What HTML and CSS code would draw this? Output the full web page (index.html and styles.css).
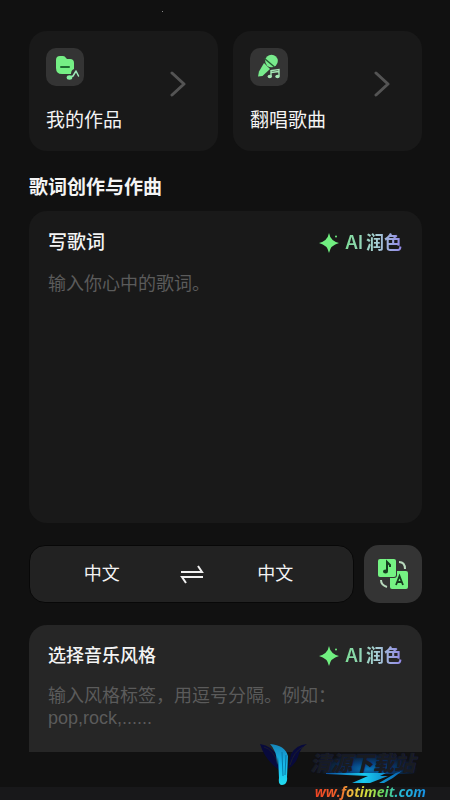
FILE: index.html
```html
<!DOCTYPE html>
<html lang="zh-CN">
<head>
<meta charset="UTF-8">
<meta name="viewport" content="width=device-width, initial-scale=1">
<title>歌词创作与作曲</title>
<link rel="stylesheet" href="styles.css">
</head>
<body>
<main class="page">
  <nav class="shortcuts">
    <a class="shortcut" href="#works">
      <span class="shortcut-main">
        <svg class="tile" viewBox="0 0 38 38" aria-hidden="true">
          <path fill="#75ef85" d="M14 8h3q2 0 3 2l1 1h3q4 0 4 4v6q-3 1-3 5h-9q-6 0-6-6v-8q0-4 4-4z"/>
          <path d="M15 19h8" stroke="#1f6b31" stroke-width="2" stroke-linecap="round"/>
          <path d="M24 29l3-1 3-5 2.500 5" fill="none" stroke="#9ce8b8" stroke-width="1.500" stroke-linejoin="round" stroke-linecap="round"/>
          <ellipse cx="23.500" cy="29.500" rx="2.800" ry="2.200" fill="#84efa0"/>
        </svg>
        <span class="shortcut-name">我的作品</span>
      </span>
      <svg class="chevron" viewBox="0 0 16 26" aria-hidden="true"><path d="M2 2l12 11L2 24"/></svg>
    </a>
    <a class="shortcut" href="#cover">
      <span class="shortcut-main">
        <svg class="tile" viewBox="0 0 38 38" aria-hidden="true">
          <circle cx="21.500" cy="13" r="6.300" fill="#78eb8c"/>
          <path d="M14 15l6 6-7.500 7-4.500.5 1-5z" fill="#78eb8c"/>
          <path d="M14.500 10.500l10 8.500" stroke="#245c31" stroke-width="1.400"/>
          <path d="M21 28v-5.500l8-1v6.500M21 24.500l8-1" fill="none" stroke="#a5e8b5" stroke-width="1.400"/>
          <g fill="#a5e8b5"><ellipse cx="19.800" cy="28.500" rx="2.200" ry="1.700"/><ellipse cx="27.500" cy="28.500" rx="2.200" ry="1.700"/></g>
        </svg>
        <span class="shortcut-name">翻唱歌曲</span>
      </span>
      <svg class="chevron" viewBox="0 0 16 26" aria-hidden="true"><path d="M2 2l12 11L2 24"/></svg>
    </a>
  </nav>

  <h1 class="heading">歌词创作与作曲</h1>

  <section class="panel">
    <div class="panel-head">
      <label class="panel-title" for="lyrics">写歌词</label>
      <button class="polish" type="button">
        <svg class="spark" viewBox="0 0 20 20" aria-hidden="true"><path d="M10 0q1.500 8 10 10-8.500 2-10 10-1.500-8-10-10 8.500-2 10-10z"/><circle cx="17" cy="3.500" r="1"/></svg>
        <span class="polish-text"><span>AI</span><span>润色</span></span>
      </button>
    </div>
    <textarea class="field lyrics" id="lyrics" placeholder="输入你心中的歌词。"></textarea>
  </section>

  <div class="language-row">
    <div class="languages">
      <button class="language" type="button">中文</button>
      <button class="swap" type="button" aria-label="切换">
        <svg viewBox="0 0 24 20" aria-hidden="true"><path d="M1 8h21l-4-6M23 13H2l4 6"/></svg>
      </button>
      <button class="language" type="button">中文</button>
    </div>
    <button class="translate" type="button" aria-label="翻译歌词">
      <svg viewBox="0 0 58 58" aria-hidden="true">
        <path d="M35 17q6 0 6 7M17 35q0 5 6 7" fill="none" stroke="#b9d9bd" stroke-width="2" />
        <rect x="26" y="26" width="18" height="18" rx="2" fill="#75f383"/>
        <rect x="13" y="13" width="20" height="20" rx="3" fill="#343434"/>
        <rect x="14" y="14" width="18" height="18" rx="2" fill="#75f383"/>
        <path d="M23 26v-9l3 3v2" fill="none" stroke="#173e20" stroke-width="2"/>
        <ellipse cx="21.500" cy="26.500" rx="2.500" ry="2" fill="#173e20"/>
        <path d="M32 40l3.500-9 3.500 9M33.500 37h4.500" fill="none" stroke="#173e20" stroke-width="1.800"/>
      </svg>
    </button>
  </div>

  <section class="panel panel-style">
    <div class="panel-head">
      <label class="panel-title panel-title-small" for="style">选择音乐风格</label>
      <button class="polish" type="button">
        <svg class="spark" viewBox="0 0 20 20" aria-hidden="true"><path d="M10 0q1.500 8 10 10-8.500 2-10 10-1.500-8-10-10 8.500-2 10-10z"/><circle cx="17" cy="3.500" r="1"/></svg>
        <span class="polish-text"><span>AI</span><span>润色</span></span>
      </button>
    </div>
    <textarea class="field style-field" id="style" placeholder="输入风格标签，用逗号分隔。例如：pop,rock,......"></textarea>
  </section>
</main>
<footer class="bottom-bar"></footer>
<span class="speck"></span>

<aside class="watermark">
  <svg class="wings" viewBox="0 0 50 44" aria-hidden="true">
    <defs><linearGradient id="wing" x1="0" y1="0" x2="0" y2="1"><stop stop-color="#1684b8"/><stop offset=".5" stop-color="#16b8ec"/><stop offset="1" stop-color="#22dcf0"/></linearGradient></defs>
    <path fill="#080a3c" d="M0 1q12 2 17 12l2 14Q5 17 0 1zM47 1Q36 2 31 11l-3 15q7-4 10-12 2-9 9-13z"/>
    <path fill="none" stroke="#1b1d2c" d="M4 4q10 3 14 17M43 4q-9 4-13 18"/>
    <path fill="url(#wing)" d="M10 1q15 1 18 12l-1 21q1 7-5 8-4 0-3-7l-1-21-1 8q0-10-3-15-2-4-4-6z"/>
    <path d="M22 9l1 24M26 12l-1 20" fill="none" stroke="#087aa9"/>
  </svg>
  <div class="mark-texts">
    <div class="mark-name">清源下载站</div>
    <svg class="swoosh" viewBox="0 0 110 14" aria-hidden="true">
      <defs><linearGradient id="flash"><stop stop-color="#0a4c9c"/><stop offset=".5" stop-color="#18caf0"/><stop offset="1" stop-color="#075db0"/></linearGradient></defs>
      <path fill="url(#flash)" d="M10 3h60l-6 3h8L54 13H36l16-7q-22-1-42-2zM86 1q-8 7-18 12h-5L80 3z"/>
    </svg>
    <div class="mark-site">ww.fotimeit.com</div>
  </div>
</aside>
</body>
</html>
```

FILE: styles.css
```css
* { box-sizing: border-box; }

body {
  position: relative;
  display: flex;
  flex-direction: column;
  min-height: 100vh;
  margin: 0;
  background: #111111;
  color: #f4f4f4;
  font-family: "Inter", "Noto Sans CJK SC", sans-serif;
}

button, textarea { font-family: inherit; border: 0; margin: 0; padding: 0; color: inherit; }
button { cursor: pointer; background: none; }
svg { display: block; }

.page { flex: 1; padding: 31px 28px 0 29px; }

.shortcuts { display: grid; grid-template-columns: 1fr 1fr; gap: 15px; }

.shortcut {
  display: flex;
  justify-content: space-between;
  padding: 17px 32px 16px 17px;
  border-radius: 18px;
  background: #191919;
  color: inherit;
  text-decoration: none;
}

.shortcut-main { display: flex; flex-direction: column; gap: 21px; }
.tile { width: 38px; height: 38px; border-radius: 10px; background: #343434; }
.shortcut-name { font-size: 19px; line-height: 28px; }
.chevron { width: 16px; height: 26px; margin-top: 23px; }
.chevron path { fill: none; stroke: #545454; stroke-width: 3; stroke-linecap: round; stroke-linejoin: round; }

.heading { margin: 23px 0 9px; font-size: 19px; line-height: 28px; font-weight: 600; }

.panel { padding: 18px 20px 16px 19px; border-radius: 18px; background: #191919; }
.panel-head { display: flex; align-items: center; justify-content: space-between; }
.panel-title { font-size: 19px; line-height: 28px; font-weight: 500; }
.panel-title-small { font-size: 18px; }

.polish { display: flex; align-items: center; gap: 6px; }
.spark { width: 20px; height: 20px; fill: #70ef80; }
.polish-text {
  display: flex;
  gap: 3px;
  font-size: 18px;
  line-height: 28px;
  font-weight: 600;
  background: linear-gradient(90deg, #7ddc97, #a8cfd4 55%, #9186e6);
  background-clip: text;
  -webkit-background-clip: text;
  color: transparent;
}

.field {
  display: block;
  width: 100%;
  resize: none;
  outline: 0;
  overflow: hidden;
  background: transparent;
  font-family: "Liberation Sans", "Noto Sans CJK SC", sans-serif;
  font-size: 18px;
  line-height: 22px;
}
.field::placeholder { color: #5b5b5b; opacity: 1; }
.lyrics { height: 234px; margin-top: 16px; }

.language-row { display: flex; gap: 10px; margin: 22px 0; }
.languages {
  flex: 1;
  display: grid;
  grid-template-columns: 1fr 30px 1fr;
  align-items: center;
  padding-right: 6px;
  border: 1px solid #080808;
  border-radius: 16px;
  background: #222222;
}
.language { font-size: 18px; line-height: 28px; }
.swap { justify-self: end; }
.swap svg { width: 24px; height: 20px; }
.swap path { fill: none; stroke: #f0f0f0; stroke-width: 2; }
.translate { width: 58px; height: 58px; border-radius: 15px; background: #343434; }

.panel-style { padding: 17px 20px 12px 19px; border-radius: 18px 18px 0 0; background: #262626; }
.style-field { height: 55px; margin-top: 15px; }

.bottom-bar { height: 13px; background: #18181a; }

.speck { position: absolute; top: 11px; left: 36%; width: 1px; height: 1px; background: #888888; }

.watermark {
  position: absolute;
  right: 24px;
  bottom: 0;
  display: flex;
  align-items: flex-start;
  pointer-events: none;
}
.wings { width: 50px; height: 44px; }
.mark-texts { display: flex; flex-direction: column; width: 116px; padding-top: 7px; }
.mark-name {
  font: italic 900 21px/24px "Noto Sans CJK SC", sans-serif;
  color: #191c21;
  background: radial-gradient(ellipse at 50% 80%, #0877b8, #07407b 25%, transparent 60%);
  text-shadow: 0 0 1px #101a58;
}
.swoosh { width: 110px; height: 14px; margin: -4px 0 0 6px; }
.mark-site {
  align-self: flex-end;
  font: italic 700 14px/16px "Open Sans", sans-serif;
  background: linear-gradient(90deg, #ed4324, #f0642b 22%, #efb23c 32%, #d5e03d 46%, #62d860 62%, #29bfd5 75%, #168fe3);
  background-clip: text;
  -webkit-background-clip: text;
  color: transparent;
}
```
